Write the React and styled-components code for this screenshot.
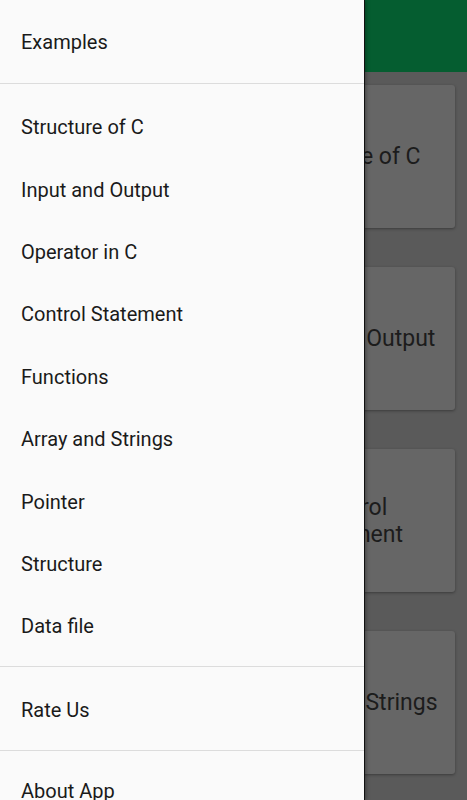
import React from "react";
import styled, { createGlobalStyle } from "styled-components";

const GlobalStyle = createGlobalStyle`
  html, body {
    margin: 0;
    padding: 0;
    overflow: hidden;
  }
  body {
    font-family: Roboto, "Noto Sans", sans-serif;
  }
`;

const topics = [
  "Structure of C",
  "Input and Output",
  "Control Statement",
  "Array and Strings",
];

const menu = [
  "Structure of C",
  "Input and Output",
  "Operator in C",
  "Control Statement",
  "Functions",
  "Array and Strings",
  "Pointer",
  "Structure",
  "Data file",
];

function App() {
  return (
    <Screen>
      <GlobalStyle />
      <Main>
        <AppBar />
        <CardList>
          {topics.map((t) => (
            <Card key={t}>
              <CardThumb />
              <CardTitle>{t}</CardTitle>
            </Card>
          ))}
        </CardList>
      </Main>
      <Drawer>
        <Section $pad="0">
          <Item $head>Examples</Item>
        </Section>
        <Divider />
        <Section>
          {menu.map((m) => (
            <Item key={m}>{m}</Item>
          ))}
        </Section>
        <Divider />
        <Section $pad="12px 0 9px">
          <Item>Rate Us</Item>
        </Section>
        <Divider />
        <Section $pad="9px 0 0">
          <Item>About App</Item>
        </Section>
      </Drawer>
    </Screen>
  );
}

export default App;

const Screen = styled.div`
  position: relative;
  width: 467px;
  height: 800px;
  overflow: hidden;
  background: #5a5a5a;
`;

const Main = styled.div`
  display: flex;
  flex-direction: column;
  height: 100%;
`;

const AppBar = styled.div`
  height: 72px;
  background: #055d30;
  flex-shrink: 0;
`;

const CardList = styled.div`
  display: flex;
  flex-direction: column;
  gap: 39px;
  padding: 13px 12px 0 12px;
`;

const Card = styled.div`
  display: flex;
  align-items: center;
  height: 143px;
  background: #666666;
  border-radius: 3px;
  box-shadow: 0 1px 3px rgba(0, 0, 0, 0.35);
`;

const CardThumb = styled.div`
  width: 233px;
  align-self: stretch;
  flex-shrink: 0;
`;

const CardTitle = styled.div`
  flex: 1;
  padding: 0 14px;
  text-align: center;
  font-size: 23px;
  line-height: 27px;
  color: #1c1c1c;
`;

const Drawer = styled.nav`
  position: absolute;
  top: 0;
  left: 0;
  bottom: 0;
  width: 364px;
  background: #fafafa;
  box-shadow: 1px 0 0 #111, 2px 0 4px rgba(0, 0, 0, 0.35);
  display: flex;
  flex-direction: column;
`;

const Section = styled.div`
  padding: ${(p) => p.$pad || "12px 0 8px"};
`;

const Item = styled.div`
  display: flex;
  align-items: center;
  height: ${(p) => (p.$head ? "83px" : "62.4px")};
  padding-left: 21px;
  font-size: 20px;
  font-weight: 400;
  color: #1a1a1a;
`;

const Divider = styled.div`
  height: 1px;
  background: #dcdcdc;
  flex-shrink: 0;
`;
